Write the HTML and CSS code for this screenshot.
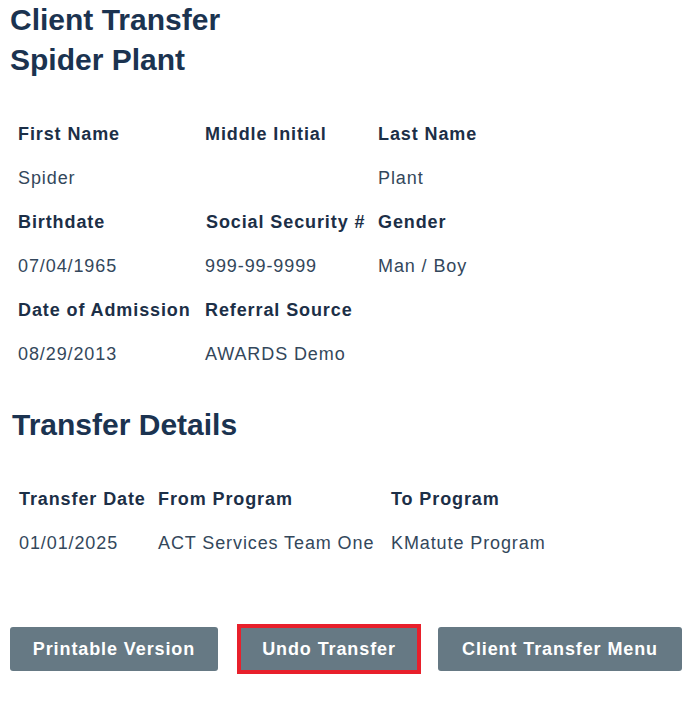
FILE: index.html
```html
<!DOCTYPE html>
<html lang="en">
<head>
<meta charset="utf-8">
<title>Client Transfer</title>
<link rel="stylesheet" href="styles.css">
</head>
<body>
<div class="page">
  <h1 class="title">Client Transfer<br>Spider Plant</h1>

  <div class="grid client">
    <div class="lbl">First Name</div><div class="lbl">Middle Initial</div><div class="lbl">Last Name</div>
    <div class="val">Spider</div><div class="val"></div><div class="val">Plant</div>
    <div class="lbl">Birthdate</div><div class="lbl ssn">Social Security #</div><div class="lbl">Gender</div>
    <div class="val">07/04/1965</div><div class="val">999-99-9999</div><div class="val">Man / Boy</div>
    <div class="lbl">Date of Admission</div><div class="lbl">Referral Source</div><div class="lbl"></div>
    <div class="val">08/29/2013</div><div class="val">AWARDS Demo</div><div class="val"></div>
  </div>

  <h2 class="section">Transfer Details</h2>

  <div class="grid transfer">
    <div class="lbl">Transfer Date</div><div class="lbl">From Program</div><div class="lbl">To Program</div>
    <div class="val">01/01/2025</div><div class="val">ACT Services Team One</div><div class="val">KMatute Program</div>
  </div>

  <div class="actions">
    <button class="btn btn-print">Printable Version</button>
    <button class="btn btn-undo">Undo Transfer</button>
    <button class="btn btn-menu">Client Transfer Menu</button>
  </div>
</div>
</body>
</html>
```

FILE: styles.css
```css
html, body {
  margin: 0;
  padding: 0;
  background: #ffffff;
}
body {
  font-family: "Liberation Sans", Arial, sans-serif;
  color: #1c2f47;
}
.page {
  width: 697px;
}
.title {
  margin: 0 0 32px 10px;
  font-size: 30px;
  line-height: 40px;
  font-weight: bold;
  color: #1b3350;
}
.section {
  margin: 29px 0 32px 12px;
  font-size: 30px;
  line-height: 40px;
  font-weight: bold;
  color: #1b3350;
}
.grid {
  display: grid;
  font-size: 18px;
  line-height: 44px;
  letter-spacing: 0.9px;
}
.client {
  margin-left: 18px;
  grid-template-columns: 187px 173px auto;
}
.transfer {
  margin-left: 19px;
  grid-template-columns: 139px 233px auto;
}
.lbl {
  font-weight: bold;
  color: #1c2f47;
  white-space: nowrap;
  height: 44px;
}
.ssn {
  padding-left: 1px;
}
.val {
  color: #33475b;
  white-space: nowrap;
  height: 44px;
}
.actions {
  display: flex;
  align-items: center;
  margin-top: 59px;
  margin-left: 10px;
  height: 50px;
}
.btn {
  font-family: "Liberation Sans", Arial, sans-serif;
  font-size: 18px;
  font-weight: bold;
  letter-spacing: 0.9px;
  color: #ffffff;
  background: #667984;
  border: none;
  border-radius: 3px;
  height: 44px;
  box-sizing: border-box;
  white-space: nowrap;
  cursor: pointer;
}
.btn-print {
  width: 208px;
  padding: 0;
}
.btn-undo {
  width: 184px;
  height: 50px;
  margin-left: 19px;
  border: 4px solid #e8202b;
  border-radius: 0;
  padding: 0;
}
.btn-menu {
  width: 244px;
  margin-left: 17px;
  padding: 0;
}
```
